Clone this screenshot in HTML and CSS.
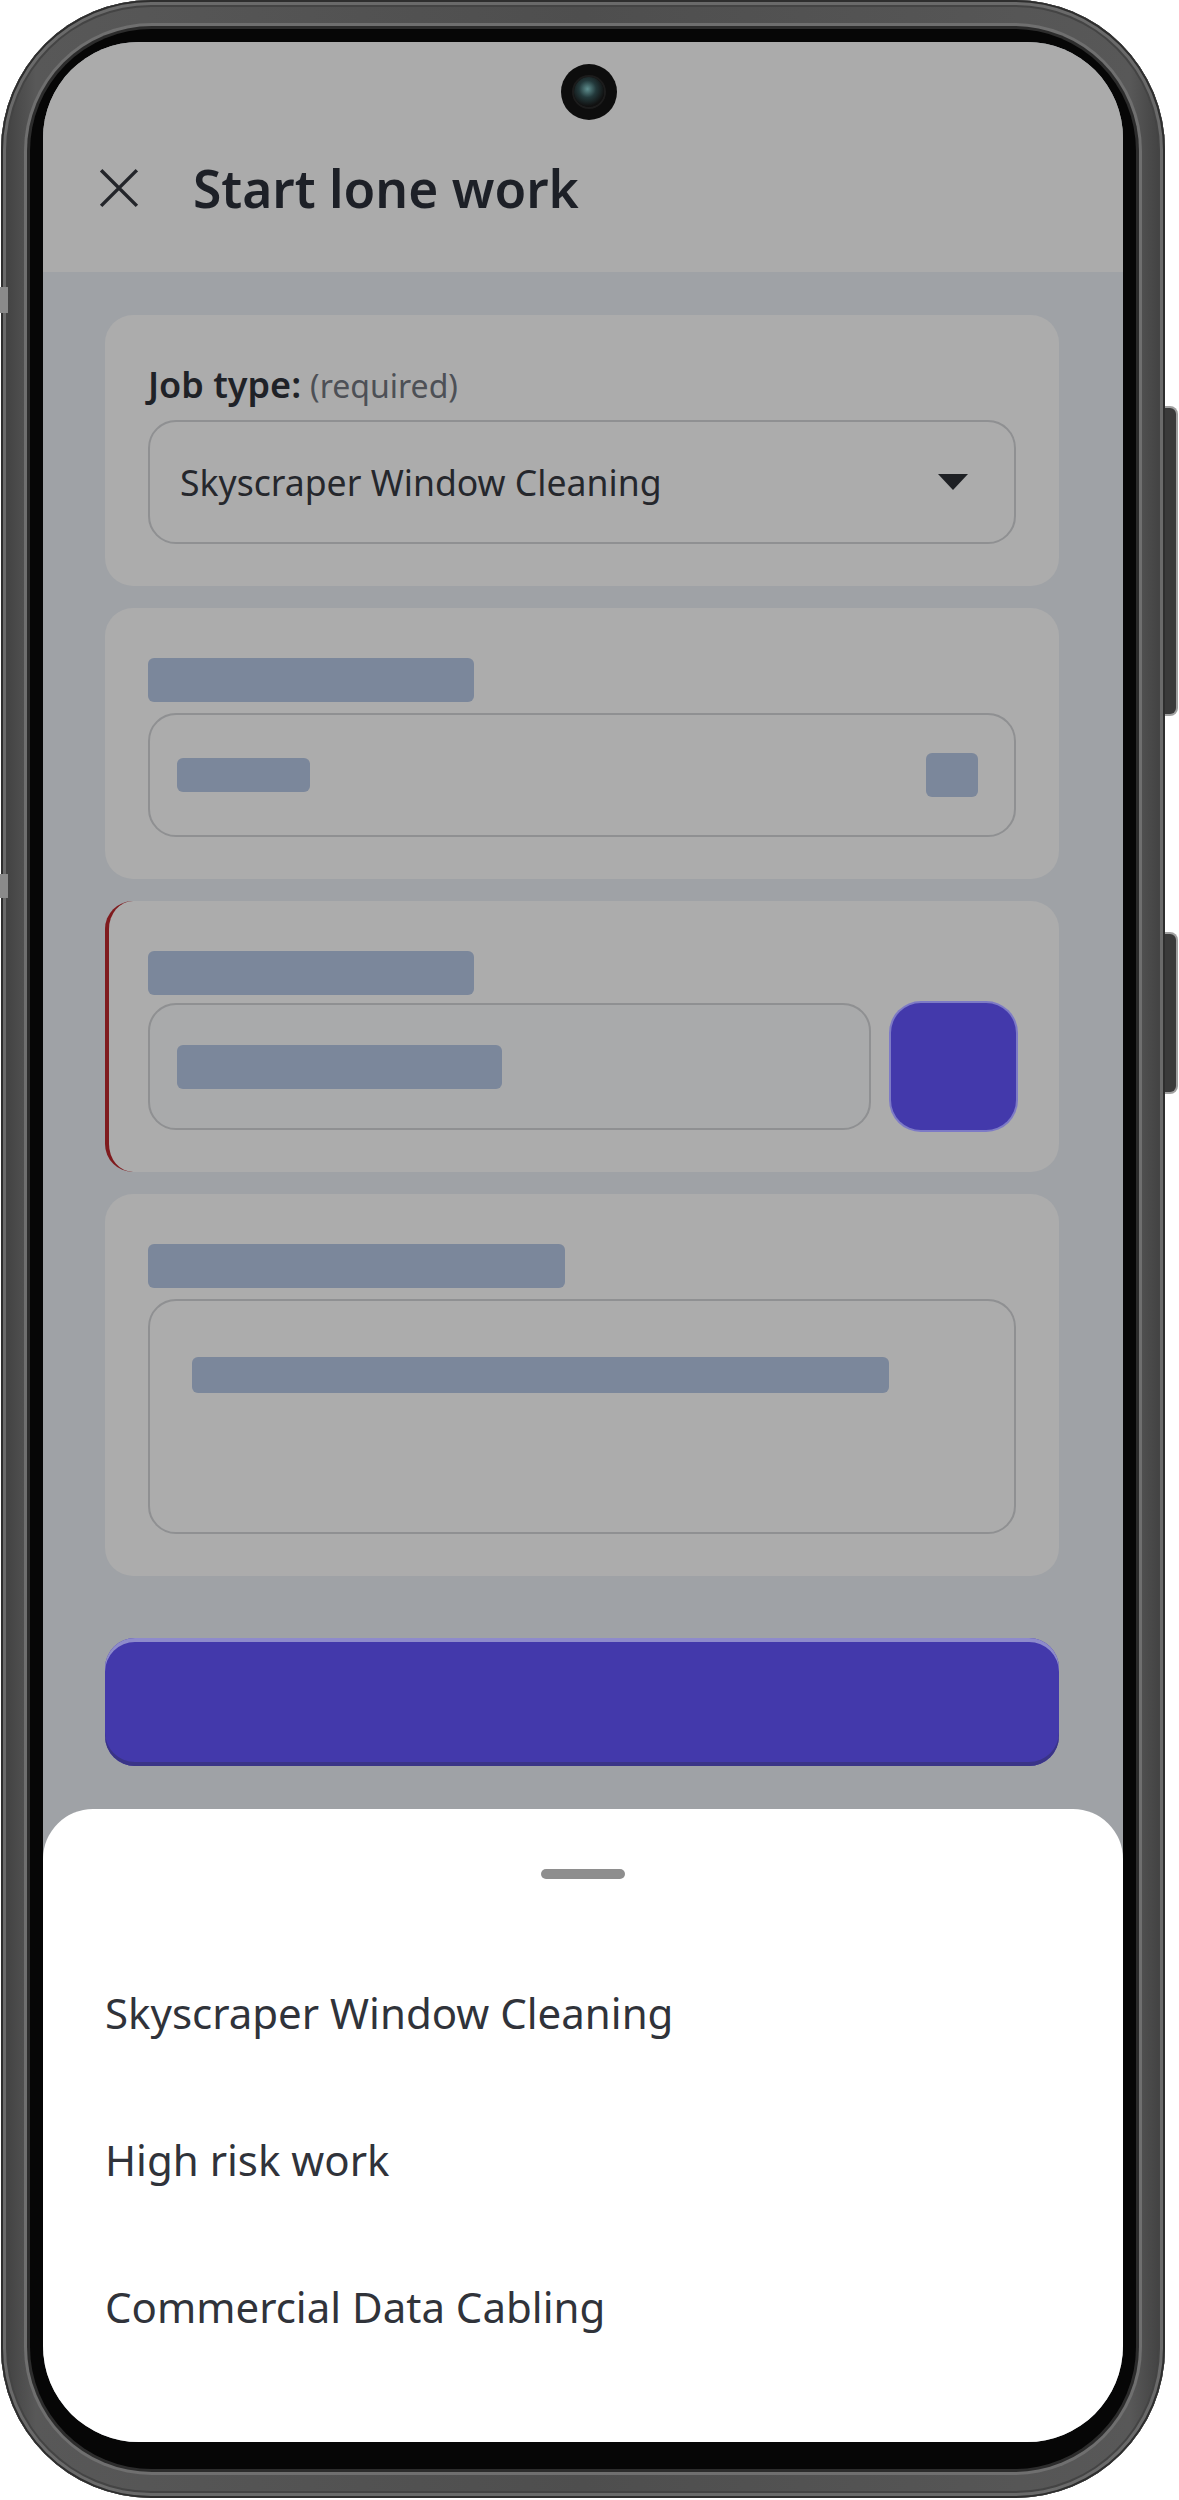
FILE: index.html
```html
<!DOCTYPE html>
<html>
<head>
<meta charset="utf-8">
<link rel="stylesheet" href="styles.css">
</head>
<body>
<div class="device">
  <span class="side-btn btn-power"></span>
  <span class="side-btn btn-vol"></span>
  <span class="side-mark mark-a"></span>
  <span class="side-mark mark-b"></span>
  <div class="bezel">
    <div class="screen">
      <span class="camera"><span class="lens"></span></span>
      <header class="appbar">
        <svg class="close-icon" viewBox="0 0 24 24" width="42" height="42">
          <path d="M2.5 2.5 L21.5 21.5 M21.5 2.5 L2.5 21.5" stroke="#23252a" stroke-width="2" stroke-linecap="square" fill="none"/>
        </svg>
        <h1 class="title">Start lone work</h1>
      </header>
      <main class="content">
        <section class="card">
          <div class="label"><span class="label-main">Job type:</span><span class="label-sub">(required)</span></div>
          <div class="field field-select">
            <span class="field-text">Skyscraper Window Cleaning</span>
            <svg class="caret" viewBox="0 0 30 16" width="30" height="16"><path d="M0 0 H30 L15 16 Z" fill="#1e2024"/></svg>
          </div>
        </section>
        <section class="card">
          <div class="skel skel-label w-326"></div>
          <div class="field field-row">
            <span class="skel skel-in w-133"></span>
            <span class="skel skel-sq"></span>
          </div>
        </section>
        <section class="card card-error">
          <div class="skel skel-label w-326"></div>
          <div class="row">
            <div class="field field-grow">
              <span class="skel skel-in tall w-325"></span>
            </div>
            <div class="icon-btn"></div>
          </div>
        </section>
        <section class="card">
          <div class="skel skel-label w-417"></div>
          <div class="field field-area">
            <span class="skel skel-area"></span>
          </div>
        </section>
        <div class="primary-btn"></div>
      </main>
      <div class="sheet">
        <div class="handle"></div>
        <ul class="options">
          <li class="option">Skyscraper Window Cleaning</li>
          <li class="option">High risk work</li>
          <li class="option">Commercial Data Cabling</li>
        </ul>
      </div>
    </div>
  </div>
</div>
</body>
</html>
```
FILE: styles.css
```css
* { box-sizing: border-box; }
html, body { margin: 0; padding: 0; background: #ffffff; }
body { font-family: "Noto Sans", "Open Sans", sans-serif; width: 1179px; height: 2500px; overflow: hidden; }

.device {
  position: relative;
  margin-left: 1px;
  width: 1164px;
  height: 2498px;
  padding: 29px;
  border-radius: 150px;
  background: linear-gradient(90deg, #3f3f3f 0%, #585858 3%, #4e4e4e 50%, #585858 97%, #3f3f3f 100%);
  box-shadow: inset 0 0 0 2px #2e2e2e, inset 0 0 0 5px #6a6a6a, inset 0 0 0 7px #444;
}
.side-btn {
  position: absolute;
  right: -13px;
  width: 13px;
  background: #3a3a3a;
  border: 2px solid #a0a0a0;
  border-left: none;
  border-radius: 0 8px 8px 0;
}
.btn-power { top: 406px; height: 310px; }
.btn-vol { top: 932px; height: 162px; }
.side-mark { position: absolute; left: -1px; width: 8px; background: #8a8a8a; }
.mark-a { top: 287px; height: 26px; }
.mark-b { top: 874px; height: 24px; }

.bezel {
  width: 1106px;
  height: 2440px;
  padding: 13px 13px 27px 13px;
  border-radius: 122px;
  background: #060606;
  box-shadow: 0 0 0 3px #2c2c2c, 0 0 0 6px #6f6f6f;
}
.screen {
  position: relative;
  width: 1080px;
  height: 2400px;
  border-radius: 96px;
  overflow: hidden;
  background: #9fa2a6;
  display: flex;
  flex-direction: column;
}
.camera {
  position: absolute;
  left: 518px;
  top: 22px;
  width: 56px;
  height: 56px;
  border-radius: 50%;
  background: #0d0d0d;
  display: flex;
  align-items: center;
  justify-content: center;
}
.lens {
  width: 30px; height: 30px; border-radius: 50%;
  background: radial-gradient(circle at 45% 40%, #5f8f8f 0%, #23393b 35%, #111 70%);
  box-shadow: 0 0 0 2px #1c1c1c;
}

.appbar {
  height: 230px;
  flex: none;
  background: #ababab;
  display: flex;
  align-items: center;
  padding: 62px 0 0 55px;
}
.close-icon { flex: none; }
.title {
  margin: 0 0 0 53px;
  font-size: 51.5px;
  font-weight: 600;
  color: #1d2027;
  letter-spacing: 0;
}

.content {
  flex: 1;
  padding: 43px 64px 0 62px;
  display: flex;
  flex-direction: column;
  gap: 22px;
}
.card {
  background: #acacac;
  border-radius: 28px;
  padding: 50px 43px 42px 43px;
  display: flex;
  flex-direction: column;
  gap: 11px;
}
.card-error { border-left: 4px solid #7f1b1e; padding-left: 39px; gap: 8px; }
.label { height: 44px; display: flex; align-items: baseline; }
.label-main { font-size: 36px; line-height: 1.1; font-weight: 600; color: #1f2227; }
.label-sub { font-size: 32px; line-height: 1.1; color: #4d5056; margin-left: 9px; }

.field {
  border: 2.5px solid #8f9092;
  border-radius: 28px;
  height: 124px;
  display: flex;
  align-items: center;
}
.field-select { padding: 0 46px 0 30px; justify-content: space-between; }
.field-text { font-size: 35.6px; color: #25272c; }
.field-row { padding: 0 36px 0 27px; justify-content: space-between; }
.row { display: flex; gap: 20px; }
.field-grow { flex: 1; height: 127px; padding-left: 27px; background: #a9aaab; }
.icon-btn {
  width: 125px; height: 127px; flex: none;
  border-radius: 30px;
  background: #4339ab;
  box-shadow: 0 0 0 2px #7d7ac6;
}
.field-area { height: 235px; align-items: flex-start; padding: 56px 0 0 42px; }

.skel { display: block; background: #7b879b; border-radius: 6px; }
.skel-label { height: 44px; }
.skel-in { height: 34px; }
.skel-in.tall { height: 44px; }
.skel-sq { width: 52px; height: 44px; }
.skel-area { width: 697px; height: 36px; }
.w-326 { width: 326px; }
.w-133 { width: 133px; }
.w-325 { width: 325px; }
.w-417 { width: 417px; }

.primary-btn {
  margin-top: 40px;
  height: 128px;
  border-radius: 30px;
  background: #4339ab;
  box-shadow: inset 0 4px 0 #8e8bcb, inset 0 -4px 0 #3a3487;
}

.sheet {
  flex: none;
  height: 633px;
  background: #ffffff;
  border-radius: 50px 50px 0 0;
  padding-top: 60px;
}
.handle { width: 84px; height: 10px; margin: 0 auto; border-radius: 5px; background: #8e8e8e; }
.options { list-style: none; margin: 60px 0 0 0; padding: 0 0 0 62px; }
.option {
  height: 147px;
  display: flex;
  align-items: center;
  font-size: 42px;
  color: #30333a;
}
```
